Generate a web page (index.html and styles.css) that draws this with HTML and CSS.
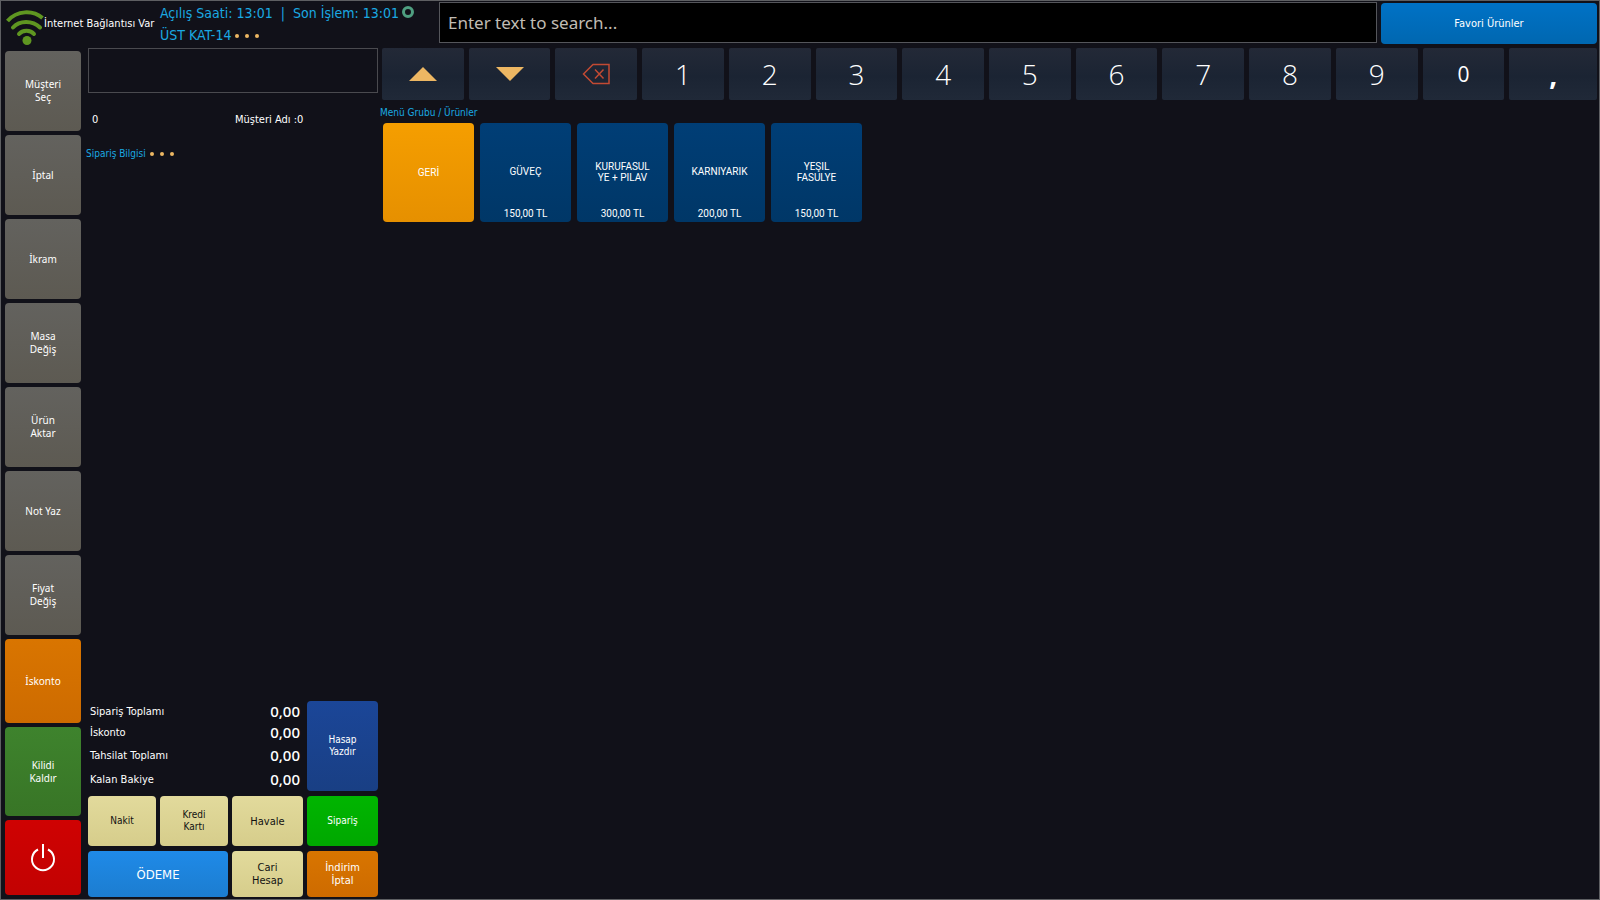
FILE: index.html
```html
<!DOCTYPE html>
<html lang="tr">
<head>
    <meta charset="UTF-8">
    <title>Sipariş</title>
    <link rel="stylesheet" href="styles.css">
</head>
<body>
<div id="wrap">
    <header class="top">
        <div class="net">
            <svg class="wifi" viewBox="0 0 38 36" fill="none" stroke="#5f9621" stroke-width="4">
                <path d="M1.500 12C11 1 27 1 36.500 9"/>
                <path d="M7 18.500C13.500 11 26.500 11 34 18.500" stroke-linecap="round"/>
                <path d="M13 25C16.500 20.500 24.500 20.500 28 25" stroke-linecap="round"/>
                <circle cx="21" cy="31.500" r="4.500" fill="#5f9621" stroke="none"/>
            </svg>
            <span>İnternet Bağlantısı Var</span>
        </div>
        <div class="info">
            <p>Açılış Saati: 13:01 &nbsp;|&nbsp; Son İşlem: 13:01<i class="ring"></i></p>
            <p>ÜST KAT-14<span class="dots"><i></i><i></i><i></i></span></p>
        </div>
        <input class="search" type="text" placeholder="Enter text to search..." aria-label="Search">
        <button class="fav">Favori Ürünler</button>
    </header>

    <div class="main">
        <nav class="side">
            <button>Müşteri<br>Seç</button>
            <button>İptal</button>
            <button>İkram</button>
            <button>Masa<br>Değiş</button>
            <button>Ürün<br>Aktar</button>
            <button>Not Yaz</button>
            <button>Fiyat<br>Değiş</button>
            <button class="discount">İskonto</button>
            <button class="unlock">Kilidi<br>Kaldır</button>
            <button class="power" aria-label="Kapat">
                <svg viewBox="0 0 26 30" fill="none" stroke="#fff" stroke-width="2">
                    <path d="M8 6.500A11 11 0 1 0 18 6.500M13 1V15"/>
                </svg>
            </button>
        </nav>

        <section class="order">
            <input class="entry" type="text" aria-label="Giriş">
            <p class="customer"><span>0</span><span>Müşteri Adı :0</span></p>
            <p class="detail">Sipariş Bilgisi<span class="dots"><i></i><i></i><i></i></span></p>
            <div class="pay">
                <dl class="totals">
                    <div><dt>Sipariş Toplamı</dt><dd>0,00</dd></div>
                    <div><dt>İskonto</dt><dd>0,00</dd></div>
                    <div><dt>Tahsilat Toplamı</dt><dd>0,00</dd></div>
                    <div><dt>Kalan Bakiye</dt><dd>0,00</dd></div>
                </dl>
                <button class="print">Hasap<br>Yazdır</button>
                <button class="cream small">Nakit</button>
                <button class="cream small">Kredi<br>Kartı</button>
                <button class="cream">Havale</button>
                <button class="send">Sipariş</button>
                <button class="checkout">ÖDEME</button>
                <button class="cream">Cari<br>Hesap</button>
                <button class="cancel">İndirim<br>İptal</button>
            </div>
        </section>

        <section class="menu">
            <div class="keys">
                <button aria-label="Yukarı"><svg width="28" height="14" viewBox="0 0 28 14"><path d="M14 0L28 14H0Z" fill="#edb763"/></svg></button>
                <button aria-label="Aşağı"><svg width="28" height="14" viewBox="0 0 28 14"><path d="M0 0H28L14 14Z" fill="#edb763"/></svg></button>
                <button aria-label="Sil"><svg width="28" height="22" viewBox="0 0 28 22" fill="none" stroke="#c24a33" stroke-width="1.500"><path d="M1.500 11L11 1.500H27V20.500H11ZM13 6.500L21.500 15.500M21.500 6.500L13 15.500"/></svg></button>
                <button>1</button>
                <button>2</button>
                <button>3</button>
                <button>4</button>
                <button>5</button>
                <button>6</button>
                <button>7</button>
                <button>8</button>
                <button>9</button>
                <button class="zero">0</button>
                <button class="comma">,</button>
            </div>
            <p class="path">Menü Grubu / Ürünler</p>
            <div class="products">
                <button class="back">GERİ</button>
                <button><span>GÜVEÇ</span><b>150,00 TL</b></button>
                <button><span>KURUFASUL<br>YE + PILAV</span><b>300,00 TL</b></button>
                <button><span>KARNIYARIK</span><b>200,00 TL</b></button>
                <button><span>YEŞIL<br>FASULYE</span><b>150,00 TL</b></button>
            </div>
        </section>
    </div>
</div>
</body>
</html>
```

FILE: styles.css
```css
*{box-sizing: border-box;}
body,p,dl,dd{margin: 0;}
body{
    background: #111119;
    color: #fff;
    font: 11px/13px "DejaVu Sans Condensed","DejaVu Sans",sans-serif;
}
button,input{
    margin: 0;
    padding: 0;
    border: none;
    color: inherit;
    font: inherit;
}
button{
    border-radius: 4px;
    text-align: center;
    cursor: pointer;
}
#wrap{
    display: flex;
    flex-direction: column;
    min-height: 100vh;
    border: 1px solid #5e5f62;
}

/* top */
.top{
    display: flex;
    height: 47px;
    padding: 1px 2px 3px 5px;
}
.net{
    display: flex;
    align-items: center;
    width: 154px;
    white-space: nowrap;
}
.wifi{
    flex: none;
    width: 38px;
    height: 36px;
    margin-top: 6px;
}
.info{
    width: 279px;
    color: #1aa9e2;
    font-size: 14px;
    line-height: 22px;
    white-space: nowrap;
}
.ring{
    display: inline-block;
    width: 12px;
    height: 12px;
    margin-left: 3px;
    border: 3px solid #4f9f80;
    border-radius: 50%;
}
.dots{
    display: inline-flex;
    gap: 6px;
    margin-left: 4px;
    vertical-align: middle;
}
.dots i{
    width: 4px;
    height: 4px;
    border-radius: 50%;
    background: #edb763;
}
.search{
    flex: 1;
    height: 41px;
    padding: 0 8px;
    border: 1px solid #55565b;
    background: #000;
    font-family: "Noto Sans",sans-serif;
    font-size: 17px;
}
.search::placeholder{
    color: #c0bcb4;
    opacity: 1;
}
.fav{
    width: 216px;
    height: 41px;
    margin: 1px 0 0 4px;
    background: linear-gradient(#0072c6,#0067b0);
}

/* main */
.main{
    display: flex;
    flex: 1;
    padding: 0 2px 2px 4px;
}
.side{
    display: flex;
    flex-direction: column;
    gap: 4px;
    width: 76px;
    padding: 3px 0 2px;
}
.side button{
    flex: 80;
    background: linear-gradient(#63625e,#5d5a52);
    font-family: "Noto Sans",sans-serif;
    font-size: 10px;
}
.side .discount{
    flex: 84;
    background: linear-gradient(#d97500,#cd6b00);
}
.side .unlock{
    flex: 89;
    background: linear-gradient(#3e832d,#387526);
}
.side .power{
    flex: 75;
    background: linear-gradient(#cf0202,#c20202);
}
.power svg{
    display: block;
    width: 26px;
    height: 30px;
    margin: 0 auto;
}

/* order */
.order{
    display: flex;
    flex-direction: column;
    width: 290px;
    margin-left: 7px;
}
.entry{
    height: 45px;
    border: 1px solid #4a4a4f;
    background: #111119;
}
.customer{
    display: grid;
    grid-template-columns: 1fr 1fr;
    padding: 20px 0 0 4px;
}
.detail{
    margin: 21px 0 0 -2px;
    color: #1aa9e2;
    font-size: 10px;
}
.pay{
    display: grid;
    grid-template-columns: 68fr 68fr 71fr 71fr;
    grid-template-rows: 90px 50px 46px;
    gap: 5px 4px;
    margin-top: auto;
}
.totals{
    display: grid;
    grid-template-rows: 20px 23px 23px 24px;
    grid-column: span 3;
    padding: 0 3px 0 2px;
}
.totals div{
    display: flex;
    justify-content: space-between;
    align-items: center;
}
.totals dd{
    font-family: "Noto Sans",sans-serif;
    font-size: 15px;
    font-weight: 500;
}
.print{background: linear-gradient(#1b4698,#193f84);}
.cream{
    background: linear-gradient(#e2da9c,#d6cd8b);
    color: #111;
}
.small,.print,.send{font-size: 10px;line-height: 12px;}
.send{background: linear-gradient(#00b500,#00a800);}
.checkout{
    grid-column: span 2;
    background: linear-gradient(#1f8ae8,#1c7dd0);
    font-size: 13px;
}
.cancel{background: linear-gradient(#d97500,#cd6b00);}

/* menu */
.menu{
    flex: 1;
    margin-left: 4px;
}
.keys{
    display: grid;
    grid-template-columns: repeat(13,82fr) 88fr;
    gap: 5px;
    height: 52px;
}
.keys button{
    display: flex;
    justify-content: center;
    align-items: center;
    border-radius: 2px;
    background: linear-gradient(#232937,#1b2433 55%,#202938);
    font-family: "Open Sans","Noto Sans",sans-serif;
    font-size: 28px;
    font-weight: 300;
}
.keys .zero{font-size: 21px;font-weight: normal;}
.keys .comma{font-weight: bold;}
.path{
    margin: 6px 0 4px -2px;
    color: #1aa9e2;
    font-size: 10px;
}
.products{
    display: flex;
    gap: 6px;
    padding-left: 1px;
}
.products button{
    display: grid;
    grid-template-rows: 1fr 14px;
    width: 91px;
    height: 99px;
    background: linear-gradient(#003e76,#003767);
    font-family: Roboto,sans-serif;
    font-size: 10px;
    line-height: 11px;
}
.products span{
    align-self: center;
    padding-top: 12px;
}
.products b{font-weight: normal;}
.products .back{
    display: block;
    background: linear-gradient(#f59e00,#e69000);
}
```
